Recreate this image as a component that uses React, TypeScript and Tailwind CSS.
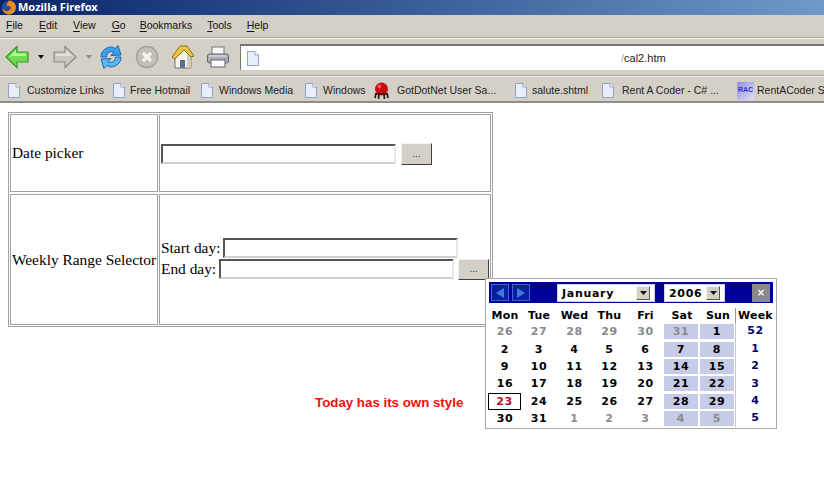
const uiFont = "[font-family:'Liberation_Sans',sans-serif]"

function PageIcon() {
  return (
    <svg width="14" height="17" viewBox="0 0 14 17" className="shrink-0">
      <path d="M1.5 1.5H9L12.5 5V15.5H1.5Z" fill="#e8eefa" stroke="#8ea3c8" />
      <path d="M9 1.5V5H12.5" fill="#fff" stroke="#8ea3c8" />
    </svg>
  )
}

function BugIcon() {
  return (
    <svg width="17" height="18" viewBox="0 0 17 18" className="shrink-0">
      <path d="M3 11L2 16M6 12L5.5 17M11 12L11.5 17M14 11L15 16" stroke="#222" strokeWidth="1.8" />
      <circle cx="8.5" cy="7" r="6.5" fill="#c80d12" />
      <circle cx="6.5" cy="4.5" r="2" fill="#ee5a5a" />
      <path d="M3 12H14" stroke="#3a0808" strokeWidth="1.5" />
    </svg>
  )
}

function RacIcon() {
  return (
    <div className={`w-[17px] h-[18px] shrink-0 bg-gradient-to-br from-[#8f8fe0] to-[#e0e0f4] flex items-center justify-center text-[7px] font-bold text-[#3333bb] ${uiFont}`}>
      RAC
    </div>
  )
}

function Toolbar() {
  return (
    <div className="h-[37px] flex items-center bg-[#d4d0c8] border-t border-[#f4f3ee]">
      <svg width="24" height="24" viewBox="0 0 24 24" className="ml-[5px]">
        <path d="M1 12L12 1.5V7H23V17H12V22.5Z" fill="#6fdc50" stroke="#2f9a25" strokeWidth="1.2" />
        <path d="M4 12L11 5V8.5H21V11H8Z" fill="#b7f29e" />
      </svg>
      <svg width="8" height="5" viewBox="0 0 8 5" className="ml-[8px]"><path d="M1 0H7L4 4Z" fill="#111" /></svg>
      <svg width="24" height="24" viewBox="0 0 24 24" className="ml-[8px]">
        <path d="M23 12L12 1.5V7H1V17H12V22.5Z" fill="#c9c7c0" stroke="#8e8c85" strokeWidth="1.2" />
        <path d="M3 9H13V5L19 11H3Z" fill="#e4e2dc" />
      </svg>
      <svg width="8" height="5" viewBox="0 0 8 5" className="ml-[8px]"><path d="M1 0H7L4 4Z" fill="#8e8c85" /></svg>
      <svg width="24" height="26" viewBox="0 0 24 26" className="ml-[6px]">
        <path d="M2 13C2 6 8 3 13 3L16 4.5L19 1.5L22 11L12 11.5L15 8C11 7 8 8 7.5 13Z" fill="#3f9fe8" stroke="#1667b5" />
        <path d="M22 13C22 20 16 23 11 23L8 21.5L5 24.5L2 15L12 14.5L9 18C13 19 16 18 16.5 13Z" fill="#5cb6f0" stroke="#1667b5" />
      </svg>
      <svg width="24" height="24" viewBox="0 0 24 24" className="ml-[12px]">
        <circle cx="12" cy="12" r="10.5" fill="#c2c0b9" stroke="#a3a19a" strokeWidth="1.5" />
        <path d="M8 8L16 16M16 8L8 16" stroke="#f4f3ee" strokeWidth="3.2" />
      </svg>
      <svg width="26" height="26" viewBox="0 0 26 26" className="ml-[11px]">
        <path d="M5 13V24H21V13L14 6Z" fill="#f6f4ec" stroke="#77736a" />
        <path d="M21 13V24H17V10Z" fill="#cfcabc" />
        <rect x="10" y="16" width="5" height="8" fill="#5b6f93" />
        <path d="M2 13L10 2H17L24 12L21 13L14 6L5 15Z" fill="#eec541" stroke="#8f6d16" />
      </svg>
      <svg width="24" height="24" viewBox="0 0 24 24" className="ml-[10px]">
        <rect x="6" y="2" width="12" height="9" fill="#f6f6f6" stroke="#777" />
        <rect x="1.5" y="9" width="21" height="9" rx="2" fill="#a8adb8" stroke="#5f6470" />
        <rect x="5" y="15" width="14" height="7" fill="#fbfbfb" stroke="#666" />
        <path d="M3 11H21" stroke="#e6e8ee" />
      </svg>
      <div className={`ml-[10px] flex-1 h-[26px] bg-white border-t-2 border-l border-[#77756e] flex items-center text-[11px] text-[#222] ${uiFont}`}>
        <div className="ml-[5px]"><PageIcon /></div>
        <span className="ml-[361px] text-[#aaa]">/</span>
        <span>cal2.htm</span>
      </div>
    </div>
  )
}

const bookmarks = [
  { label: 'Customize Links', box: 'w-[105px] ml-[7px] gap-[6px]', icon: <PageIcon /> },
  { label: 'Free Hotmail', box: 'w-[88px] gap-[4px]', icon: <PageIcon /> },
  { label: 'Windows Media', box: 'w-[104px] gap-[5px]', icon: <PageIcon /> },
  { label: 'Windows', box: 'w-[69px] gap-[5px]', icon: <PageIcon /> },
  { label: 'GotDotNet User Sa...', box: 'w-[141px] gap-[7px]', icon: <BugIcon /> },
  { label: 'salute.shtml', box: 'w-[87px] gap-[4px]', icon: <PageIcon /> },
  { label: 'Rent A Coder - C# ...', box: 'w-[136px] gap-[7px]', icon: <PageIcon /> },
  { label: 'RentACoder S', box: 'gap-[3px]', icon: <RacIcon /> },
]

const menus = [
  { key: 'F', rest: 'ile', gap: 'ml-[6px]' },
  { key: 'E', rest: 'dit', gap: 'ml-[16px]' },
  { key: 'V', rest: 'iew', gap: 'ml-[16px]' },
  { key: 'G', rest: 'o', gap: 'ml-[16px]' },
  { key: 'B', rest: 'ookmarks', gap: 'ml-[14px]' },
  { key: 'T', rest: 'ools', gap: 'ml-[15px]' },
  { key: 'H', rest: 'elp', gap: 'ml-[15px]' },
]

function Input({ w }: { w: string }) {
  return <div className={`${w} h-[20px] bg-white border-2 border-t-[#555] border-l-[#555] border-r-[#e6e6e6] border-b-[#d0d0d0] shrink-0`} />
}

function DotsButton({ h }: { h: string }) {
  return (
    <div className={`w-[31px] ${h} bg-[#d4d0c8] border border-t-[#f5f5f0] border-l-[#f5f5f0] border-r-[#404040] border-b-[#404040] flex items-center justify-center text-[10px] text-[#333] shrink-0 ${uiFont}`}>
      ...
    </div>
  )
}

const headers = ['Mon', 'Tue', 'Wed', 'Thu', 'Fri', 'Sat', 'Sun']
const weeks = [
  { no: '52', days: ['26', '27', '28', '29', '30', '31', '1'], off: [0, 1, 2, 3, 4, 5] },
  { no: '1', days: ['2', '3', '4', '5', '6', '7', '8'], off: [] },
  { no: '2', days: ['9', '10', '11', '12', '13', '14', '15'], off: [] },
  { no: '3', days: ['16', '17', '18', '19', '20', '21', '22'], off: [] },
  { no: '4', days: ['23', '24', '25', '26', '27', '28', '29'], off: [] },
  { no: '5', days: ['30', '31', '1', '2', '3', '4', '5'], off: [2, 3, 4, 5, 6] },
]
const cols = 'grid grid-cols-[32px_36px_35px_35px_37px_36px_36px_39px]'

function Select({ label, w }: { label: string; w: string }) {
  return (
    <div className={`${w} h-[18px] bg-white border border-[#d0d0e8] flex items-center justify-between pl-[4px] pr-[4px]`}>
      <span className="text-[11px] font-bold tracking-[0.7px] mt-[3px]">{label}</span>
      <div className="w-[14px] h-[14px] bg-[#d4d0c8] border border-t-[#f5f5f0] border-l-[#f5f5f0] border-r-[#555] border-b-[#555] flex items-center justify-center">
        <svg width="7" height="4" viewBox="0 0 7 4"><path d="M0 0H7L3.5 4Z" fill="#111" /></svg>
      </div>
    </div>
  )
}

function ArrowBtn({ left }: { left?: boolean }) {
  return (
    <div className="w-[18px] h-[17px] bg-[#0a1f9e] border border-[#3a66dd] flex items-center justify-center">
      <svg width="10" height="10" viewBox="0 0 10 10"><path d={left ? 'M9 0V10L1 5Z' : 'M1 0V10L9 5Z'} fill="#3f7bd8" /></svg>
    </div>
  )
}

function Calendar() {
  return (
    <div className="absolute left-[485px] top-[278px] w-[292px] h-[151px] bg-white border border-[#a9a9a9] pl-[3px] pt-[3px] text-[11px] font-bold text-black [font-family:'DejaVu_Sans',sans-serif]">
      <div className="w-[284px] h-[21px] bg-[#000099] flex items-center">
        <div className="ml-[2px] flex gap-[3px]"><ArrowBtn left /><ArrowBtn /></div>
        <div className="ml-[27px]"><Select label="January" w="w-[98px]" /></div>
        <div className="ml-[9px]"><Select label="2006" w="w-[61px]" /></div>
        <div className="ml-[27px] w-[18px] h-[18px] bg-[#8a8a8a] flex items-center justify-center text-white text-[10px] leading-none">×</div>
      </div>
      <div className={`${cols} h-[18px] mt-[2px] pt-[3px] items-center text-center tracking-[0.2px]`}>
        {headers.map(h => <div key={h}>{h}</div>)}
        <div className="border-l border-[#999] -ml-[1px] flex items-center justify-center">Week</div>
      </div>
      {weeks.map(week => (
        <div key={week.no} className={`${cols} h-[17.4px] items-center text-center tracking-[0.6px]`}>
          {week.days.map((d, i) => {
            const off = (week.off as number[]).includes(i)
            const weekend = i > 4
            return (
              <div
                key={i}
                className={`h-[15px] leading-[15px] ${weekend ? 'bg-[#c6cbe8] mr-[2px]' : ''} ${off ? 'text-[#8a8a8a]' : ''} ${d === '23' ? 'text-[#b01030] h-[17px] leading-[15px] border border-black -ml-[1px]' : ''}`}
              >
                {d}
              </div>
            )
          })}
          <div className="h-full border-l border-[#c8c8c8] -ml-[1px] text-[#000066] flex items-center justify-center">{week.no}</div>
        </div>
      ))}
    </div>
  )
}

export default function App() {
  return (
    <div className="relative w-[824px] h-[498px] overflow-hidden bg-white">
      <div className="h-[15px] bg-gradient-to-r from-[#0a246a] to-[#7098c8] flex items-center">
        <svg width="16" height="15" viewBox="0 0 16 15" className="ml-[1px]">
          <circle cx="8" cy="7.5" r="7" fill="#2a4a9e" />
          <path d="M8 0.5A7 7 0 1 1 1 8C3 12 8 12 9.5 9C10.5 7 8.5 5 5.5 6C5.5 3 7.5 2 8 0.5Z" fill="#ec8a1c" />
        </svg>
        <span className="ml-[1px] text-white text-[11px] font-bold [font-family:'Noto_Sans',sans-serif]">Mozilla Firefox</span>
      </div>

      <div className={`h-[23px] bg-[#d4d0c8] flex items-center border-b border-[#a8a69e] text-[10.5px] text-[#111] ${uiFont}`}>
        {menus.map(m => (
          <span key={m.key} className={m.gap}>
            <span className="underline underline-offset-2">{m.key}</span>{m.rest}
          </span>
        ))}
      </div>

      <Toolbar />

      <div className="h-[2px] bg-[#a8a69e] border-b border-[#f4f3ee]" />

      <div className={`h-[26px] pt-[3px] bg-[#d4d0c8] border-b-2 border-[#8e8c85] flex items-center text-[10.5px] text-[#222] whitespace-nowrap ${uiFont}`}>
        {bookmarks.map(b => (
          <div key={b.label} className={`flex items-center shrink-0 ${b.box}`}>
            {b.icon}
            <span>{b.label}</span>
          </div>
        ))}
      </div>

      <div className="pt-[9px] pl-[8px] text-[15.4px] text-black [font-family:'Liberation_Serif',serif]">
        <div className="w-[485px] h-[215px] border border-[#a0a0a0] p-[1px] flex flex-col gap-[2px]">
          <div className="flex gap-[1px] h-[78px]">
            <div className="w-[148px] border border-[#a0a0a0] flex items-center pl-[1px]">Date picker</div>
            <div className="flex-1 border border-[#a0a0a0] flex items-center pl-[1px] pt-[1px]">
              <Input w="w-[235px]" />
              <div className="ml-[5px]"><DotsButton h="h-[22px]" /></div>
            </div>
          </div>
          <div className="flex gap-[1px] flex-1">
            <div className="w-[148px] border border-[#a0a0a0] flex items-center pl-[1px] whitespace-nowrap">Weekly Range Selector</div>
            <div className="flex-1 border border-[#a0a0a0] flex flex-col justify-center pl-[1px] pb-[2px] gap-[1px] whitespace-nowrap leading-[20px]">
              <div className="flex items-center gap-[3px]">Start day: <Input w="w-[235px]" /></div>
              <div className="flex items-center gap-[3px]">End day: <Input w="w-[235px]" /><div className="ml-[1px]"><DotsButton h="h-[21px]" /></div></div>
            </div>
          </div>
        </div>
        <div className="mt-[66px] ml-[307px] text-[13.3px] font-bold text-[#ee1111] [font-family:'Liberation_Sans',sans-serif]">Today has its own style</div>
      </div>

      <Calendar />
    </div>
  )
}
